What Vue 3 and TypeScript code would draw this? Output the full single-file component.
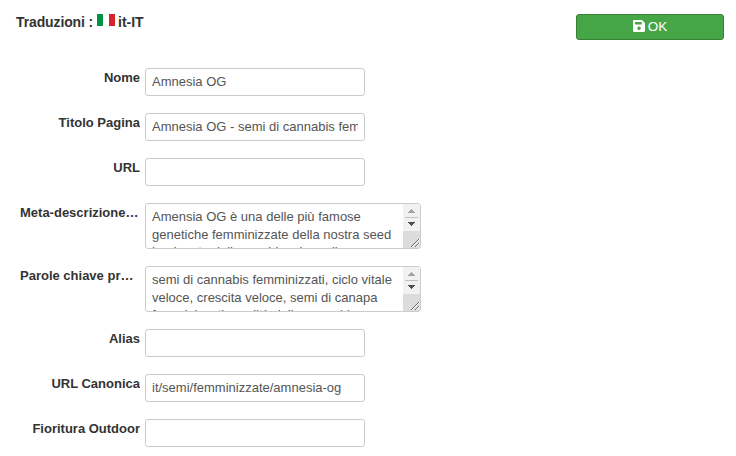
<script setup lang="ts">
import { ref } from 'vue'

interface Field {
  label: string
  value: string
  lines?: string[]
}

const fields = ref<Field[]>([
  { label: 'Nome', value: 'Amnesia OG' },
  { label: 'Titolo Pagina', value: 'Amnesia OG - semi di cannabis femminizzati' },
  { label: 'URL', value: '' },
  {
    label: 'Meta-descrizione pagina',
    value: '',
    lines: ['Amensia OG è una delle più famose', 'genetiche femminizzate della nostra seed', 'bank nata dalla combinazione di'],
  },
  {
    label: 'Parole chiave predefinite',
    value: '',
    lines: ['semi di cannabis femminizzati, ciclo vitale', 'veloce, crescita veloce, semi di canapa', 'femminizzati, qualità della cannabis'],
  },
  { label: 'Alias', value: '' },
  { label: 'URL Canonica', value: 'it/semi/femminizzate/amnesia-og' },
  { label: 'Fioritura Outdoor', value: '' },
])
</script>

<template>
  <main class="page">
    <header class="top">
      <h1 class="title">
        <span class="caption">Traduzioni :</span>
        <svg class="flag" width="18" height="12" viewBox="0 0 18 12" shape-rendering="crispEdges">
          <path fill="#009246" d="M0 0h6v12H0z" />
          <path fill="#fff" d="M6 0h6v12H6z" />
          <path fill="#d8232f" d="M12 0h6v12h-6z" />
        </svg>
        <span>it-IT</span>
      </h1>
      <button class="ok" type="button">
        <svg class="disk" width="12" height="12" viewBox="0 0 12 12">
          <path fill="#fff" fill-rule="evenodd" d="M1.2 0h7.9L12 2.9v7.9c0 .7-.5 1.2-1.2 1.2H1.2C.5 12 0 11.500 0 10.800V1.200C0 .5.5 0 1.200 0zM2 1.900v2.700h6.700V1.900zM6 6.400a1.800 1.800 0 1 0 0 3.600a1.800 1.800 0 1 0 0-3.600z" />
        </svg>
        <span>OK</span>
      </button>
    </header>

    <form class="form" @submit.prevent>
      <div v-for="field in fields" :key="field.label" class="row">
        <label class="label" :class="{ long: field.lines }">{{ field.label }}</label>
        <div v-if="field.lines" class="area">
          <div class="text">
            <div v-for="line in field.lines" :key="line" class="line">{{ line }}</div>
          </div>
          <svg class="scroll" width="17" height="44" viewBox="0 0 17 44">
            <path fill="#f1f1f1" d="M0 0h17v27H0z" />
            <path fill="#dcdcdc" d="M0 27h17v17H0z" />
            <path fill="#a3a3a3" d="M8 5h1v1h1v1h1v1h1v1H5V8h1V7h1V6h1z" shape-rendering="crispEdges" />
            <path fill="#c1c1c1" d="M2 13h13v1H2z" />
            <path fill="#505050" d="M5 18h7v1h-1v1h-1v1H9v1H8v-1H7v-1H6v-1H5z" shape-rendering="crispEdges" />
            <path fill="none" stroke="#fff" d="M9 43l8-8M13 43l4-4" />
            <path fill="none" stroke="#666" d="M8 43l8-8M12 43l4-4" />
          </svg>
        </div>
        <input v-else v-model="field.value" class="input" type="text" />
      </div>
    </form>
  </main>
</template>

<style>
body {
  background: #fff;
  overflow: hidden;
}
</style>

<style scoped>
.page {
  box-sizing: border-box;
  width: 736px;
  height: 456px;
  padding: 14px 12px 0 16px;
  overflow: hidden;
  color: #333;
  font: 13px/18px "Liberation Sans", Arial, sans-serif;
}

.top {
  display: flex;
  align-items: flex-start;
  justify-content: space-between;
  height: 54px;
}

.title {
  display: flex;
  margin: 0;
  font-size: 14px;
  font-weight: 700;
  line-height: 17px;
  white-space: nowrap;
}

.caption {
  width: 79px;
  letter-spacing: -0.12px;
}

.flag {
  margin: 0 3px 0 2px;
}

.ok {
  display: flex;
  box-sizing: border-box;
  align-items: center;
  justify-content: center;
  gap: 3px;
  width: 148px;
  height: 26px;
  padding: 0 0 1px;
  border: 1px solid #378137;
  border-radius: 3px;
  background: #46a546;
  color: #fff;
  font: 13.5px/18px "Liberation Sans", Arial, sans-serif;
}

.disk {
  margin-bottom: 1px;
}

.form {
  display: flex;
  flex-direction: column;
  gap: 17px;
}

.row {
  display: flex;
  align-items: flex-start;
}

.label {
  width: 124px;
  margin: 1px 5px 0 0;
  overflow: hidden;
  font-weight: 700;
  text-align: right;
  text-overflow: ellipsis;
  white-space: nowrap;
}

.label.long {
  box-sizing: border-box;
  padding-left: 4px;
  text-align: left;
}

.input,
.area {
  box-sizing: border-box;
  border: 1px solid #ccc;
  border-radius: 3px;
  background: #fff;
  color: #555;
  font: 13px/18px "Liberation Sans", Arial, sans-serif;
}

.input {
  width: 220px;
  height: 28px;
  padding: 3px 6px 5px;
  outline: none;
}

.area {
  display: flex;
  width: 276px;
  height: 46px;
  overflow: hidden;
}

.text {
  flex: 1;
  padding: 4px 0 0 6px;
  white-space: nowrap;
}

.line:last-child {
  margin-top: -1px;
}

.scroll {
  flex: none;
}
</style>
